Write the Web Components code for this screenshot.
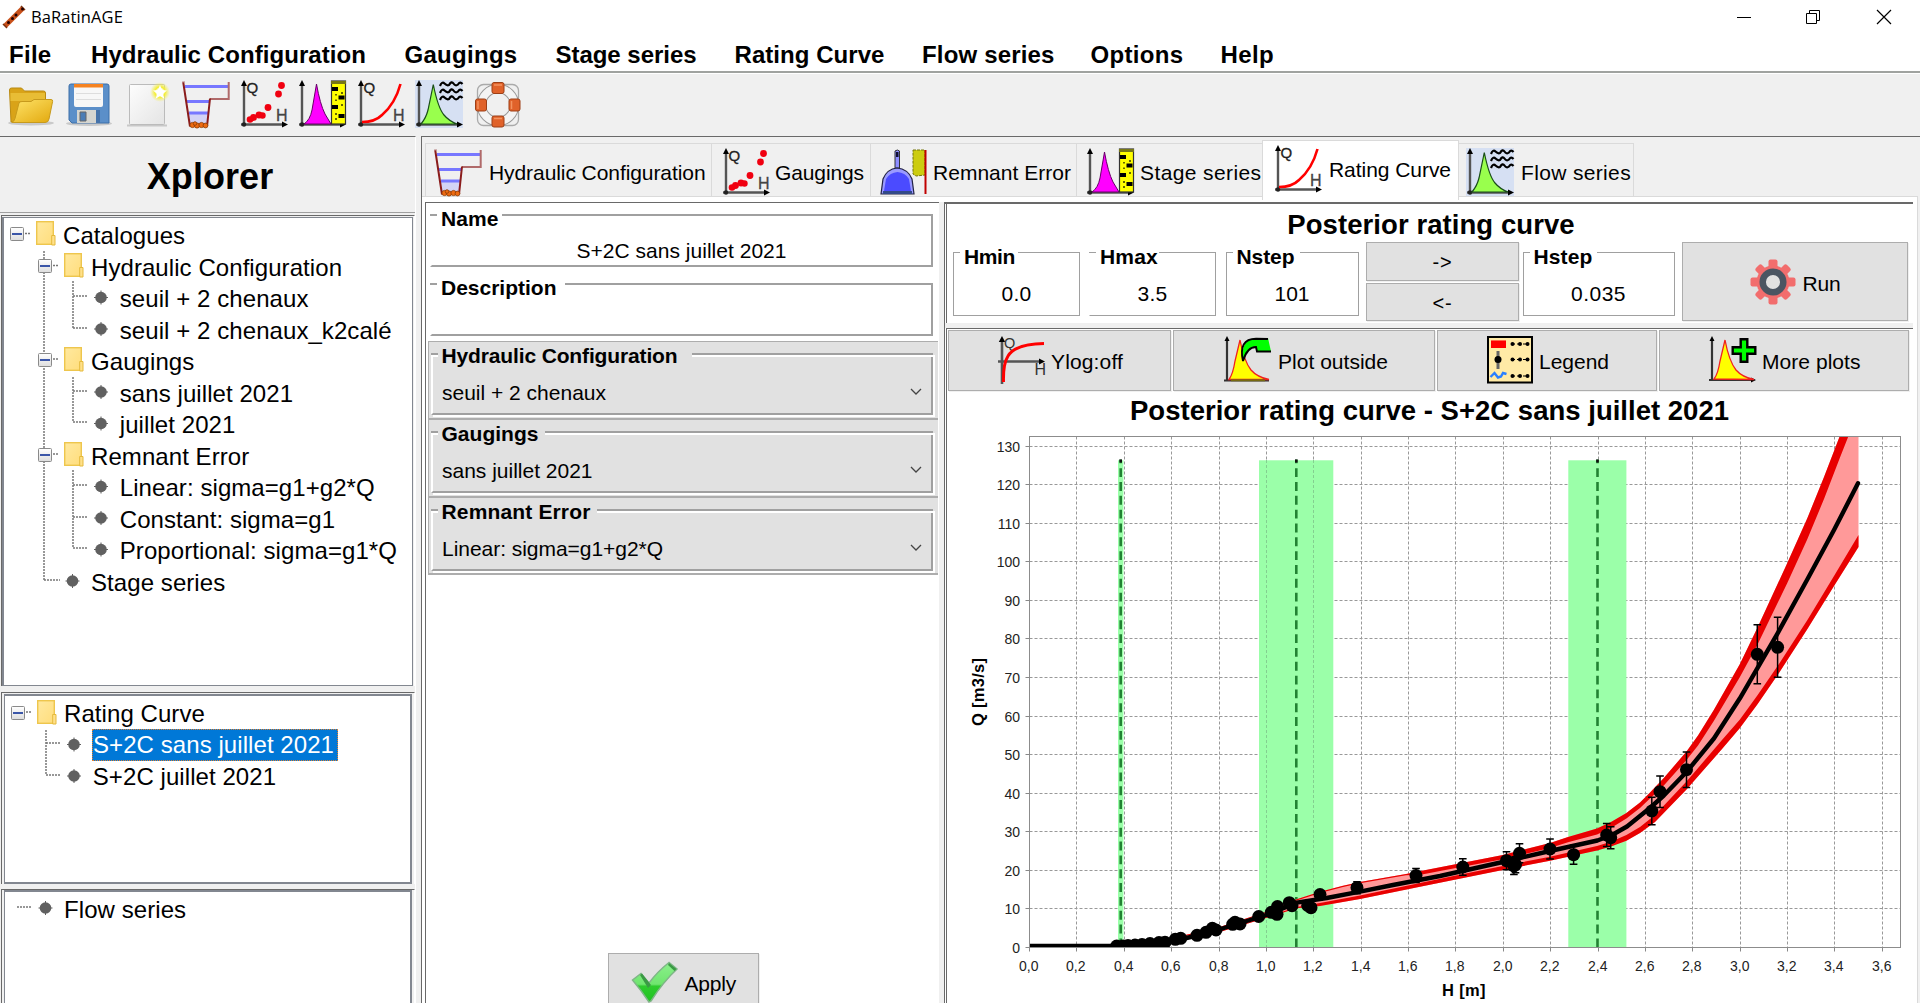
<!DOCTYPE html>
<html lang="en">
<head>
<meta charset="utf-8">
<title>BaRatinAGE</title>
<style>
html,body{margin:0;height:100%;overflow:hidden;background:#fff;font-family:"Liberation Sans",Arial,sans-serif;color:#000}
</style>
</head>
<body>
<baratin-app></baratin-app>
<script>
const define=(name,css,html,setup)=>customElements.define(name,class extends HTMLElement{
  connectedCallback(){
    if(this.shadowRoot)return;
    const r=this.attachShadow({mode:'open'});
    r.innerHTML=`<style>${css}</style>${typeof html==='function'?html(this):html}`;
    if(setup)setup(this,r);
  }
});

/* ---------- icons, all on a 48x48 grid ---------- */
const axes=`<path d="M4 6V45M1 44.5H44" stroke="#555" stroke-width="2.4" fill="none"/><path d="M4 0l3 6H1z" fill="#000"/><path d="M48 44.5l-6-3v6z" fill="#000"/><circle cx="4" cy="44.5" r="2.2" fill="#222"/>`;
const QH=`<text x="6.500" y="12.500" font-size="15" fill="#222" stroke="#222" stroke-width=".3">Q</text><text x="36" y="40.500" font-size="16" fill="#444" stroke="#444" stroke-width=".3">H</text>`;
const wave=y=>`M25 ${y+2.500}q2-5 4.500-2.500t4.500 1.500q2.500-4.500 4.500-1.500t4.500 1q2-3.500 4.500-.5`;
const ICONS={
folder:`<defs><linearGradient id="g1" x1="0" y1="0" x2="1" y2="1"><stop offset="0" stop-color="#ffe46a"/><stop offset="1" stop-color="#e2a80d"/></linearGradient></defs><ellipse cx="24" cy="43" rx="23" ry="2.5" fill="#c9c9c9"/><path d="M2.500 10q0-2 2-2h10l3 3h19q2 0 2 2v29H4z" fill="#d9a318" stroke="#b98a13"/><path d="M3.500 13h34.500v8H3.500z" fill="#e8bd35"/><path d="M12 23q1-1.500 3-1.500h9l3-2h17q2 0 1.600 2L42 39q-.6 3.500-4 3.500H5q2-1 3-4z" fill="url(#g1)" stroke="#c79a1c"/>`,
floppy:`<ellipse cx="24" cy="43.500" rx="23" ry="2.500" fill="#c9c9c9"/><path d="M4 6q0-2 2-2h36q2 0 2 2v37H7l-3-3z" fill="#5b8fc9" stroke="#3d6ea8"/><path d="M9 4h29v21q0 2-2 2H11q-2 0-2-2z" fill="#f7f7f7"/><path d="M9 4h29v3.500H9z" fill="#f58220"/><path d="M11 13.500h25M11 19.500h25" stroke="#ddd"/><path d="M12 30h19v13H12z" fill="#d5d5d0"/><path d="M15 32h6v9h-6z" fill="#4c7db5" stroke="#666"/><path d="M31 30h4v13h-4z" fill="#4573aa"/>`,
newdoc:`<defs><radialGradient id="g2"><stop offset=".3" stop-color="#fff"/><stop offset=".5" stop-color="#f4ee30"/><stop offset="1" stop-color="#f6f16a" stop-opacity="0"/></radialGradient><linearGradient id="g3" x1="0" y1="0" x2="1" y2="1"><stop offset="0" stop-color="#fdfdfd"/><stop offset="1" stop-color="#e4e4e4"/></linearGradient></defs><path d="M3 45.500h40" stroke="#c8c8c8" stroke-width="2"/><rect x="5.500" y="4.500" width="35" height="40" rx="1" fill="url(#g3)" stroke="#bbb"/><circle cx="36" cy="12" r="10" fill="url(#g2)"/><path d="M36 5l2 5 5 .4-4 3.300 1.300 5-4.300-2.700-4.300 2.700 1.300-5-4-3.300 5-.4z" fill="#fff"/>`,
hydro:`<path d="M6.500 33h20L25 46H8.500z" fill="#d3d3f5"/><path d="M3 6.500h43M5 21.500h22M7 33h19" stroke="#7777ff" stroke-width="2.800"/><path d="M28 19h18.700V2" stroke="#b06a6a" stroke-width="2" fill="none"/><path d="M1.200 2L8 46.500M28 18.500L25 46.500" stroke="#8a1c1c" stroke-width="2" fill="none"/><path d="M0 2h3" stroke="#b88" /><g fill="#ee6a11" stroke="#8a3c08" stroke-width=".8"><circle cx="10.500" cy="45" r="2.600"/><circle cx="15" cy="45.500" r="2.600"/><circle cx="19.500" cy="45" r="2.600"/><circle cx="23.500" cy="45.500" r="2.400"/><circle cx="13" cy="43.500" r="1.800"/></g>`,
gaug:axes+QH+`<g fill="#f00010"><circle cx="41.500" cy="5.500" r="3.400"/><circle cx="38.500" cy="14" r="3.400"/><circle cx="28" cy="27.500" r="3.400"/><circle cx="19" cy="35" r="3.400"/><circle cx="22.500" cy="35.500" r="3.200"/><circle cx="13.500" cy="37.500" r="3.400"/><circle cx="10" cy="39.500" r="3.300"/></g>`,
stage:axes+`<path d="M6 44Q12 40 14 30L18.500 4Q22 24 27 34L33 44z" fill="#f0f" stroke="#606" /><rect x="33.500" y="1" width="14" height="43" fill="#ff0" stroke="#333" stroke-width="1.200"/><path d="M33 2.500h15" stroke="#777716" stroke-width="3"/><path d="M34 7h6v4h-6zM40.500 15.500h6v4h-6zM34 25h6v4h-6zM40.500 34h6v4h-6z"/><path d="M38 14v1.500m0 4V21m0 12v2m0 3v2m6-28v2m0 10v2" stroke="#000" stroke-width="1.200"/>`,
rating:axes+QH+`<path d="M5 42Q18 42 25 35Q38 24 43.500 4" stroke="#f00" stroke-width="2.600" fill="none"/>`,
flow:`<rect width="48" height="48" fill="#d6e0f3"/>`+axes+`<path d="M6 44Q11 38 13 30L18.300 4.500Q23 28 29 35Q34 41 42 44z" fill="#99ff4d" stroke="#1a4d1a" stroke-width="1.200"/><path d="${wave(3.500)}${wave(10.500)}${wave(17.500)}" stroke="#000" stroke-width="2.200" fill="none"/>`,
help:`<rect x="4.500" y="4.500" width="41" height="41" rx="6" fill="none" stroke="#aaa" stroke-width="1.300"/><circle cx="25" cy="25" r="16.500" fill="none" stroke="#9a9a9a" stroke-width="9.500"/><circle cx="25" cy="25" r="16.500" fill="none" stroke="#f4f4f4" stroke-width="7.500"/><g fill="#e0622a" stroke="#9d3f16"><rect x="19" y="2.500" width="12" height="11" rx="2"/><rect x="19" y="36" width="12" height="11" rx="2"/><rect x="2.500" y="19" width="11" height="12" rx="2"/><rect x="36" y="19" width="11" height="12" rx="2"/></g><path d="M21 5h8M21 38.500h8M5 21v8M38.500 21v8" stroke="#f3935f" stroke-width="1.500"/>`,
dustpan:`<path d="M15 3q2.500-2 4.500 0v17h-4.500z" fill="#8d8dff" stroke="#333"/><rect x="16" y="4" width="2.500" height="5" fill="#113"/><path d="M1 46L3 31Q7 21 17 20Q28 21 32 31L34 46z" fill="#9a9aff" stroke="#224" stroke-width="1.200"/><path d="M4 43L6 31Q10 24.500 17.500 24Q25 24.500 29 31L31 43z" fill="#4b4bff"/><path d="M3 43h29v3H3z" fill="#334a88"/><path d="M33 2h12v25l-9 1-3-2z" fill="#cccc10" stroke="#77770c" stroke-dasharray="3 1"/><path d="M45.500 2V46" stroke="#c00000" stroke-width="2"/>`,
ylog:`<path d="M4 6V48M0 25.500H42" stroke="#555" stroke-width="2.600"/><path d="M4 0l3.200 6H.8z"/><path d="M47 25.500l-6-3v6z"/><text x="6" y="12" font-size="14.500" fill="#333">Q</text><text x="36.500" y="39" font-size="16" fill="#333">H</text><path d="M5.500 46Q5 28 10 20Q17 8 46 7.500" stroke="#f00" stroke-width="3" fill="none"/>`,
plotout:`<path d="M4 3V44M1 44.500H46" stroke="#333" stroke-width="2.200"/><path d="M4 0l2.500 5h-5z"/><path d="M6 43.500Q10 38 12 25L17 4Q21 25 28 34Q34 41 46 43.500z" fill="#ff0" stroke="#f02020" stroke-width="1.300"/><path d="M8 44.300h34" stroke="#776a10" stroke-width="2"/><path d="M20 25Q17 2 34 2.500L45 2 48 15.500H33V11Q23 11 20 25z" fill="#0f0"/><path d="M20 25Q15 3 33 2.800L45 3M48 15.500H34l-1-4.500Q24 11 20 25" fill="none" stroke="#000" stroke-width="1.900"/>`,
legend:`<rect x="2" y="1" width="44" height="45.500" fill="#ffeaa6" stroke="#000" stroke-width="2"/><rect x="5" y="4" width="15" height="8" fill="#f00"/><path d="M5 4.500h15" stroke="#ff6a4a"/><path d="M12 15v18" stroke="#666" stroke-width="3"/><circle cx="12" cy="23.500" r="3.500"/><path d="M4.500 41l4-4 3.500 4.500 3-1 2-3.500 3.500 1" stroke="#2a7fff" stroke-width="2.400" fill="none"/><g><circle cx="26.500" cy="8" r="2"/><circle cx="34" cy="8" r="2"/><circle cx="41.500" cy="8" r="2"/><circle cx="26.500" cy="23.500" r="2"/><circle cx="34" cy="23.500" r="2"/><circle cx="41.500" cy="23.500" r="2"/><circle cx="26.500" cy="40" r="2"/><circle cx="34" cy="40" r="2"/><circle cx="41.500" cy="40" r="2"/><path d="M25 8h18M25 23.500h18M25 40h18" stroke="#000" stroke-width="1" stroke-dasharray="4 2"/></g>`,
more:`<path d="M4 3V44M1 44H46" stroke="#333" stroke-width="2.200"/><path d="M4 0l2.500 5h-5zM48 44l-5-2.500v5z"/><path d="M6 43Q10 38 12 25L17 4Q21 25 28 34Q34 41 46 43.500z" fill="#ff0" stroke="#f02020" stroke-width="1.300"/><path d="M31.500 2h9v8h8v9h-8v8h-9v-8h-8v-9h8z" fill="#000"/><path d="M33.900 4.400h4.200v8h8v4.200h-8v8h-4.200v-8h-8v-4.200h8z" fill="#0f0"/>`,
gear:`<g fill="#f26d6d"><circle cx="24" cy="24" r="16.500"/><g><rect x="19.500" y="1.500" width="9" height="45" rx="2"/><rect x="1.500" y="19.500" width="45" height="9" rx="2"/></g><g transform="rotate(45 24 24)"><rect x="19.700" y="2" width="8.600" height="44" rx="2.500"/><rect x="2" y="19.700" width="44" height="8.600" rx="2.500"/></g></g><circle cx="24" cy="24" r="10.300" fill="#e1e1e1" stroke="#4b5562" stroke-width="6.500"/>`,
check:`<defs><linearGradient id="g4" x1="0" y1="0" x2="0" y2="1"><stop offset="0" stop-color="#8cf08c"/><stop offset=".55" stop-color="#6fe56f"/><stop offset=".6" stop-color="#2ecb2e"/><stop offset="1" stop-color="#1fc31f"/></linearGradient></defs><path d="M1.500 20L10 13.500 18 23Q26 12 38 2.500L46 9Q32 22 20 41l-2 1Q10 30 1.500 20z" fill="url(#g4)" stroke="#7fb587" stroke-width="1.500"/><path d="M9 15l2-1.500L20 25l-3 3zM38 3l7.500 6-2 2-6.500-6z" fill="#3a9a44"/>`,
flute:`<path d="M6 42L42 6" stroke="#c8501a" stroke-width="10"/><path d="M2 38l8 8M38 2l8 8" stroke="#7a3210" stroke-width="3"/><g fill="#200"><circle cx="13" cy="35" r="3"/><circle cx="21" cy="27" r="3"/><circle cx="28" cy="20" r="3"/><circle cx="41" cy="8" r="3"/></g>`
};
define('app-icon',`:host{display:block;flex:none;width:48px;height:48px}svg{display:block;width:100%;height:100%;overflow:visible;font-family:"Liberation Sans",sans-serif}`,
  e=>`<svg viewBox="0 0 48 48">${ICONS[e.getAttribute('name')]}</svg>`);

/* Single-line label whose tracking is set so that it is `w` pixels wide. */
define('fit-text',`:host{display:block;flex:none;white-space:pre}span{display:inline-block}`,`<span><slot></slot></span>`,(e,r)=>{
  const w=+e.getAttribute('w');if(!w)return;
  const s=r.querySelector('span'),n=e.textContent.length;
  s.style.letterSpacing=((w-s.getBoundingClientRect().width)/n).toFixed(3)+'px';
});

/* ---------- window chrome ---------- */
define('title-bar',`:host{display:flex;height:34px;align-items:center;background:#fff;box-sizing:border-box;padding-left:2px}
app-icon{width:24px;height:24px}fit-text{font:16.500px/24px "Open Sans",sans-serif;margin-left:5px;flex:1 1 auto}
svg{display:block}.c{display:flex;gap:54px;padding-right:28px}`,
`<app-icon name="flute"></app-icon><fit-text w="92">BaRatinAGE</fit-text>
<div class="c"><svg width="16" height="16"><path d="M1 8.500h14" stroke="#000"/></svg>
<svg width="16" height="16" fill="none" stroke="#000"><path d="M.5 4.500h10v10H.5zM3.500 4V1.500h10v10H11"/></svg>
<svg width="16" height="16" stroke="#000" stroke-width="1.200"><path d="M1 1l14 14M15 1L1 15"/></svg></div>`);

define('menu-bar',`:host{display:flex;height:37px;background:#fff;font:bold 24px/42px "Liberation Sans",sans-serif;border-bottom:2px solid #a0a3a0;box-sizing:content-box}fit-text{height:37px}`,
`<fit-text style="margin-left:9px" w="42.500">File</fit-text><fit-text style="margin-left:39.500px" w="275">Hydraulic Configuration</fit-text><fit-text style="margin-left:38.500px" w="113">Gaugings</fit-text><fit-text style="margin-left:38px" w="141">Stage series</fit-text><fit-text style="margin-left:38px" w="150">Rating Curve</fit-text><fit-text style="margin-left:37.500px" w="132.500">Flow series</fit-text><fit-text style="margin-left:36px" w="93">Options</fit-text><fit-text style="margin-left:37px" w="53.500">Help</fit-text>`);

define('tool-bar',`:host{display:flex;gap:10.300px;height:63px;box-sizing:border-box;padding:6px 0 0 7px;background:#f0f0f0;border-top:1px solid #fff}`,
  ['folder','floppy','newdoc','hydro','gaug','stage','rating','flow','help'].map(n=>`<app-icon name="${n}"></app-icon>`).join(''));

/* ---------- explorer ---------- */
define('tree-view',`:host{display:grid;overflow:hidden;background:#fff;font:24px/31.550px "Liberation Sans",sans-serif;align-items:start;letter-spacing:.07px}
svg,.rows{grid-area:1/1}svg{display:block}.rows{display:flex;flex-direction:column;align-items:flex-start}::slotted(*){white-space:pre;height:31.550px}`,
e=>{
  const [ox,oy]=e.getAttribute('origin').split(',').map(Number);
  const lines=(e.getAttribute('lines')||'').split(' ').map(s=>{const[a,b,c,d]=s.split(',');return `M${a} ${b}L${c} ${d}`}).join('');
  const pts=k=>(e.getAttribute(k)||'').split(' ').filter(Boolean).map(s=>s.split(',').map(Number));
  return `<svg width="130" height="380" viewBox="${ox} ${oy} 130 380"><defs><linearGradient id="f" x1="0" y1="0" x2="1" y2="1"><stop offset="0" stop-color="#ffe9a0"/><stop offset="1" stop-color="#ffdd7c"/></linearGradient><linearGradient id="b" x1="0" y1="0" x2="0" y2="1"><stop offset="0" stop-color="#fff"/><stop offset="1" stop-color="#ddd"/></linearGradient></defs>
  <path d="${lines}" stroke="#777" stroke-width="1.500" stroke-dasharray="2 1" fill="none"/>
  ${pts('boxes').map(([x,y])=>`<rect x="${x+.5}" y="${y+.5}" width="13" height="13" rx="1" fill="url(#b)" stroke="#8a8a8a"/><path d="M${x+2} ${y+7}h10" stroke="#3b56a8" stroke-width="2"/>`).join('')}
  ${pts('folders').map(([x,y])=>`<rect x="${x+.7}" y="${y+.7}" width="16.600" height="22.600" fill="url(#f)" stroke="#eec64d" stroke-width="1.400"/><path d="M${x+15.700} ${y+24}v-9.500h3.300v9.500z" fill="#ffe08a" stroke="#e5ba3c"/>`).join('')}
  ${pts('dots').map(([x,y])=>`<circle cx="${x}" cy="${y}" r="5.800" fill="#606060"/><path d="M${x-7} ${y}h14M${x} ${y-7}v14" stroke="#606060"/>`).join('')}</svg>
  <div class="rows" style="padding-top:${e.getAttribute('top')}px"><slot></slot></div>`});

define('x-plorer',`:host{display:flex;flex-direction:column;width:415px;border-top:1px solid #696969;border-right:1px solid #fff;background:#f0f0f0;overflow:hidden}
.h{height:76px;flex:none;box-sizing:border-box;padding:3px 0 0 5px;display:flex;justify-content:center;font:bold 36px/74px "Liberation Sans",sans-serif;border-bottom:1px solid #a0a0a0}
.o{box-sizing:border-box;flex:none;border:solid #696969;border-width:1px 0 0 1px;margin-left:1px;display:flex;border-right:1px solid #fff}
tree-view{flex:1}
.a{margin-top:2px;height:471px;padding:1px 1px 0 0}.a tree-view{border:solid #828790;border-width:1px 1px 1px 2px}
.b{margin-top:6px;height:192px;padding:1px 2px 0 2px}.b tree-view,.c tree-view{border:solid #828790;border-width:2px 2px 2px 1px}
.c{margin-top:5px;height:130px;padding:0 2px 0 2px}
.l1{padding-left:87px}.l2{padding-left:115.800px}.m1{padding-left:87.800px}
.sel{margin-left:87px;background:#0078d7;color:#fff;outline:1px dotted #e08030;outline-offset:-1px;padding:0 4px 0 1px}`,
`<div class="h"><fit-text w="126.500">Xplorer</fit-text></div>
<div class="o a"><tree-view origin="4,218" top="2" boxes="10,227 38,259 38,353 38,448" folders="36,221 64,253 64,347 64,442" dots="101,297.500 101,329 101,392 101,423.500 101,486.500 101,518 101,549.500 72.500,581" lines="25,233.500,31,233.500 44,251,44,580 53,265.500,59,265.500 53,359,59,359 53,454,59,454 73,281,73,328 73,296,88,296 73,328,88,328 73,377,73,422 73,391,88,391 73,422,88,422 73,470,73,548 73,485,88,485 73,517,88,517 73,548,88,548 44,580,60,580">
<div style="padding-left:59px">Catalogues</div><div class="l1">Hydraulic Configuration</div><div class="l2">seuil + 2 chenaux</div><div class="l2">seuil + 2 chenaux_k2calé</div><div class="l1">Gaugings</div><div class="l2">sans juillet 2021</div><div class="l2">juillet 2021</div><div class="l1">Remnant Error</div><div class="l2">Linear: sigma=g1+g2*Q</div><div class="l2">Constant: sigma=g1</div><div class="l2">Proportional: sigma=g1*Q</div><div class="l1">Stage series</div></tree-view></div>
<div class="o b"><tree-view origin="5,696" top="1.900" boxes="11,706" folders="37,700" dots="74,744.500 74,776" lines="26,712,32,712 46,730,46,775 46,743,61,743 46,775,61,775"><div style="padding-left:59px">Rating Curve</div><div class="sel">S+2C sans juillet 2021</div><div class="m1">S+2C juillet 2021</div></tree-view></div>
<div class="o c"><tree-view origin="5,892" top="1.500" dots="45.500,908" lines="17,907,31,907"><div style="padding-left:59px">Flow series</div></tree-view></div>`);

/* ---------- etched titled box ---------- */
define('etched-box',`:host{display:flex;flex-direction:column;box-sizing:border-box;--t:1px;--hl:transparent;--ml:-7.300px;border:solid #a0a0a0;border-width:0 var(--t) var(--t) var(--t);font-size:21px;line-height:24px}
:host([kind=thick]){--t:2px;border-left-color:transparent}
:host([kind=combo]){--t:2px;--hl:#fff;--ml:-8.300px;border-left-color:#fff;box-shadow:2px 2px #fff}
.h{display:flex;align-items:flex-start;margin:0 calc(var(--t)*-1)}
.s{border-top:var(--t) solid #a0a0a0;box-shadow:0 var(--t) var(--hl);width:7px;flex:none}.s.r{flex:1}
.t{flex:none;box-sizing:border-box;margin-top:var(--ml);padding-left:4px;font-weight:bold}
.v{display:flex;justify-content:center}:host([kind=combo]) .v{justify-content:space-between;padding:0 9px 0 9.500px}
svg{display:block;margin-top:7px}`,
e=>`<div class="h"><i class="s"></i><div class="t" style="width:${e.getAttribute('gap')}px"><fit-text w="${e.getAttribute('tw')}">${e.getAttribute('label')}</fit-text></div><i class="s r"></i></div>
<div class="v" style="margin-top:${e.getAttribute('vy')}px"><fit-text w="${e.getAttribute('vw')||0}">${e.getAttribute('value')||''}</fit-text>${e.getAttribute('kind')==='combo'?'<svg width="12" height="8"><path d="M1 1l5 5 5-5" fill="none" stroke="#444" stroke-width="1.300"/></svg>':''}</div>`);

define('combo-field',`:host{display:flex;box-sizing:border-box;height:78px;flex:none;background:#e1e1e1;border:1px solid #adadad;border-right:0;padding:10.500px 5px 0 2px}etched-box{flex:1;height:62px}`,
e=>`<etched-box kind="combo" label="${e.getAttribute('label')}" tw="${e.getAttribute('tw')}" gap="${e.getAttribute('gap')}" value="${e.getAttribute('value')}" vw="${e.getAttribute('vw')}" vy="12.500"></etched-box>`);

define('push-button',`:host{display:flex;box-sizing:border-box;background:#e1e1e1;border:1px solid #adadad;align-items:center;font-size:21px;line-height:24px;box-shadow:1px 1px #f0f0f0}`,`<slot></slot>`);

define('config-panel',`:host{display:flex;flex-direction:column;box-sizing:border-box;width:514px;border:solid #696969;border-width:1px 0 0 1px;background:#fff;padding-top:11px}
.g{margin:0 6px 0 4px;height:53px;flex:none}.d{margin-top:16px}.cs{margin:5px 1px 0 1.500px;flex:none}.cs combo-field:last-child{border-bottom:2px solid #adadad}
push-button{margin:378px 0 0 181.500px;width:151px;height:62px;padding:0 0 0 22px;flex:none}`,
`<etched-box class="g" kind="thick" label="Name" tw="57.500" gap="65" value="S+2C sans juillet 2021" vw="210" vy="8.700"></etched-box>
<etched-box class="g d" kind="thick" label="Description" tw="115.500" gap="128" vy="7.700"></etched-box>
<div class="cs"><combo-field label="Hydraulic Configuration" tw="236" gap="254" value="seuil + 2 chenaux" vw="164"></combo-field><combo-field label="Gaugings" tw="97" gap="107" value="sans juillet 2021" vw="150.500"></combo-field><combo-field label="Remnant Error" tw="149" gap="159" value="Linear: sigma=g1+g2*Q" vw="221"></combo-field></div>
<push-button><app-icon name="check"></app-icon><fit-text style="margin-left:6px" w="51.500">Apply</fit-text></push-button>`);

/* ---------- tabs ---------- */
define('tab-item',`:host{display:flex;box-sizing:border-box;flex:none;height:54px;border:solid #dadada;border-width:1px 1px 1px 0;background:#f0f0f0;font-size:21px;line-height:24px;padding:4px 0 0 0}
:host(:first-child){border-left-width:1px}:host([selected]){height:60px;margin:-3px 0 -3px -1px;background:#fff;border-bottom:0;border-left-width:1px}
fit-text{margin-top:13px}`,
e=>`<app-icon style="margin-left:${e.getAttribute('ix')}px" name="${e.getAttribute('icon')}"></app-icon><fit-text style="margin-left:${e.getAttribute('gx')}px" w="${e.getAttribute('tw')}">${e.textContent}</fit-text>`);

/* ---------- rating curve chart ---------- */
define('rating-chart',`:host{display:block}svg{display:block;font-family:"Liberation Sans",sans-serif}`,()=>{
  const X=h=>1029.5+h*236.900,Y=q=>947.300-q*3.854;
  const L=1029.5,R=1900.5,T=436.5,B=947.500;
  let hg='',vg='',lab='';
  for(let q=0;q<=130;q+=10){const y=Math.round(Y(q)-.5)+.5;if(q)hg+=`M${L} ${y}H${R}`;lab+=`<path d="M${L-4} ${y}h4" stroke="#888"/><text x="1020" y="${y+5.500}" text-anchor="end">${q}</text>`}
  for(let i=0;i<=18;i++){const x=Math.round(X(i*.2)-.5)+.5;if(i)vg+=`M${x} ${T}V${B}`;lab+=`<path d="M${x} ${B}v4" stroke="#888"/><text x="${x-.7}" y="970.700" text-anchor="middle">${(i*.2).toFixed(1).replace('.',',')}</text>`}
  const up=[[1150,943,944],[1218,927.500,928.500],[1266,912,913],[1296.700,899.300,900.500],[1320,891.700,893],[1343,885.700,887],[1360,882,883.200],[1406,874,875.200],[1422,870.700,874.500],[1440,867.300,871],[1502.800,855,859.300],[1550,843,848],[1568,837,842.300],[1597,828.500,834.500],[1611,822,828],[1626.400,813,818.500],[1640,802.500,808],[1650.500,792,798],[1663.800,778,785.500],[1686.500,751.500,760],[1698,735.500,745.500],[1713.800,710,721],[1739.900,664,677],[1757.300,628,645],[1787.300,563,583],[1807.400,518,539],[1824,477,499],[1839.800,436,458],[1848.500,412,436],[1858.500,385,410]];
  const lo=[[1150,946,947],[1218,931.500,932.500],[1266,917,918],[1296.700,907,908.200],[1320,903,906],[1360,895.500,899],[1420,883,886.700],[1462,874.300,878.300],[1502.800,866,870],[1550,856.700,860.700],[1597,846,850.500],[1611,841.700,846.500],[1626.400,835,840.700],[1640,827,833],[1655,815,822],[1686.500,781.500,789.500],[1722,740,749],[1739.900,719.500,728],[1757.300,695.500,704.500],[1777.600,666,675],[1807.400,620,629],[1834,576,586],[1858.500,535,547]];
  const poly=a=>'M'+a.map(p=>p[0]+' '+p[1]).join('L')+'L'+[...a].reverse().map(p=>p[0]+' '+p[2]).join('L')+'Z';
  const pink='M'+up.map(p=>p[0]+' '+p[1]).join('L')+'L'+[...lo].reverse().map(p=>p[0]+' '+p[2]).join('L')+'Z';
  const mid=[[1029,946],[1113,946],[1150,944],[1171.600,941.500],[1197,935.500],[1219,929.500],[1266.400,915],[1296.700,902.700],[1326.700,898],[1360,891.700],[1393,885],[1440,876],[1502.800,862],[1550,851],[1597.400,840.500],[1612,835],[1627,826.500],[1650.500,807.500],[1663.800,795.500],[1686.500,772],[1713.900,738.500],[1739.900,698.300],[1757.300,668.300],[1777.600,633.300],[1807.400,579.300],[1834,530],[1858,483.300]];
  const pts=[[1116.700,946],[1123,946],[1128,945.500],[1135,945],[1142,944.500],[1150,943.500],[1159,942.500],[1165,942.300],[1175.300,939.300],[1180.700,938.300],[1197,935.300],[1206,932.300],[1212.300,928.300],[1216,930],[1232.700,924.300],[1235,922.300],[1240,924],[1258.700,916.500],[1271.300,912.300],[1277.500,906.500],[1277,914.300],[1289.300,902.700],[1292,905.700],[1307.700,905.500],[1311,907.700],[1320,894.500],[1357,887.700,6],[1416,875.500,7],[1462.800,867,8.300],[1506.500,860.700,9],[1519.500,853.300,9.500],[1513.900,866,8.500],[1515.500,864.700,8],[1550,849,10],[1573.600,854.700,9.500],[1606.700,835,11.500],[1610.700,837.700,11],[1651.800,811,13.700],[1660,791.700,15.700],[1686.500,769.700,17.700],[1757.300,654.300,29.500],[1777.600,647.300,30]];
  const bar=(a,b)=>`<rect x="${a}" y="460.300" width="${b-a}" height="487" fill="#9bffa9"/>`;
  const dl=c=>`<path d="M${c} 947.300V459.500" stroke="#228233" stroke-width="2.600" stroke-dasharray="8.900 4.930"/><path d="M${c} 462.500v-3" stroke="#111" stroke-width="2.600"/>`;
  return `<svg width="966" height="612" viewBox="947 391 966 612">
  <text x="1130" y="420" font-size="27.500" font-weight="bold" textLength="599" lengthAdjust="spacing">Posterior rating curve - S+2C sans juillet 2021</text>
  <clipPath id="c"><rect x="1029" y="437" width="871" height="510.500"/></clipPath>
  <path d="${hg}" stroke="#999" stroke-dasharray="3 2"/><path d="${vg}" stroke="#999" stroke-dasharray="3 2"/>
  <g clip-path="url(#c)">${bar(1118,1123.400)}${bar(1259,1333.300)}${bar(1568.300,1626.400)}
  <path d="M1266.500 460V947M1313.500 460V947" stroke="#84cf90" stroke-dasharray="3 2"/>
  ${dl(1120.700)}${dl(1296.300)}${dl(1597.500)}
  <path d="${pink}" fill="#f99"/><path d="${poly(up)}${poly(lo)}" fill="#e80000"/>
  <polyline points="${mid.map(p=>p.join()).join(' ')}" fill="none" stroke="#000" stroke-width="4.400" stroke-linejoin="round" stroke-linecap="round"/>
  ${pts.map(([x,y,e])=>`<circle cx="${x}" cy="${y}" r="6.500"/>`+(e?`<path d="M${x} ${y-e}V${y+e}M${x-3.800} ${y-e}h7.600M${x-3.800} ${y+e}h7.600" stroke="#000" stroke-width="1.500"/>`:'')).join('')}</g>
  <rect x="${L}" y="${T}" width="${R-L}" height="${B-T}" fill="none" stroke="#8c8c8c"/>
  <g font-size="14" fill="#222">${lab}</g>
  <text x="1442" y="996" font-size="16.500" font-weight="bold" textLength="43.500">H [m]</text>
  <text transform="translate(984 726) rotate(-90)" font-size="16.500" font-weight="bold" textLength="68">Q [m3/s]</text></svg>`});

define('curve-panel',`:host{display:flex;flex-direction:column;flex:1;box-sizing:border-box;background:#fff;border:solid #696969;border-width:2px 0 0 1px}
.top{height:119px;flex:none;border-left:1px solid #696969;margin-left:1px;display:flex;flex-direction:column;align-items:center;box-sizing:border-box}
h2{margin:3px 0 0;padding-left:2px;height:35px;font:bold 27.500px/35px "Liberation Sans",sans-serif}
.f{display:flex;align-self:stretch;height:79px}.f etched-box{height:64px;margin-top:10px;flex:none}
.ar{display:flex;flex-direction:column;gap:2px;width:153px;margin-left:7.500px}.ar push-button{height:38.500px;justify-content:center;font-size:20px;padding-top:2px}
.sp{height:5px;flex:none;background:#f0f0f0}
.bot{border:solid #696969;border-width:1px 0 0 1px;margin-left:1px;flex:1;min-height:0}
.btns{display:flex;gap:2px;padding:1px 0 0 1px}.btns push-button{height:61px;padding-bottom:1px}.btns fit-text{margin-top:4px}`,
`<div class="top"><h2><fit-text w="287.500">Posterior rating curve</fit-text></h2><div class="f">
<etched-box style="margin-left:6px;width:127px" label="Hmin" tw="51" gap="58" value="0.0" vw="30" vy="13.700"></etched-box>
<etched-box style="margin-left:9px;width:127px;border-left-color:transparent" label="Hmax" tw="58" gap="63" value="3.5" vw="30" vy="13.700"></etched-box>
<etched-box style="margin-left:9.500px;width:133px" label="Nstep" tw="58" gap="67" value="101" vw="35" vy="13.700"></etched-box>
<div class="ar"><push-button><fit-text w="20">-&gt;</fit-text></push-button><push-button><fit-text w="20">&lt;-</fit-text></push-button></div>
<etched-box style="margin-left:3.500px;width:152px" label="Hstep" tw="59" gap="67" value="0.035" vw="55" vy="13.700"></etched-box>
<push-button style="margin-left:7px;width:226px;padding-left:66px"><app-icon name="gear"></app-icon><fit-text style="margin:4px 0 0 6px" w="38">Run</fit-text></push-button></div></div>
<div class="sp"></div>
<div class="bot"><div class="btns">
<push-button style="width:223px;padding-left:49px"><app-icon name="ylog"></app-icon><fit-text w="72" style="margin-left:5px">Ylog:off</fit-text></push-button>
<push-button style="width:262px;padding-left:49px"><app-icon name="plotout"></app-icon><fit-text w="110" style="margin-left:7px">Plot outside</fit-text></push-button>
<push-button style="width:220px;padding-left:48px"><app-icon name="legend"></app-icon><fit-text w="70" style="margin-left:5px">Legend</fit-text></push-button>
<push-button style="width:250px;padding-left:48px"><app-icon name="more"></app-icon><fit-text w="98.500" style="margin-left:6px">More plots</fit-text></push-button></div>
<rating-chart></rating-chart></div>`);

define('work-area',`:host{display:flex;flex-direction:column;flex:1;box-sizing:border-box;border:solid #696969;border-width:1px 0 0 1px;min-width:0;background:#f0f0f0}
.tabs{position:relative;display:flex;padding:6px 0 0 3px;height:60px;box-sizing:border-box;align-items:flex-start}
.pg{flex:1;min-height:0;display:flex;background:#fff;border:solid #dadada;border-width:1px 1px 0 0;margin-right:2px;margin-top:-1px;padding:5px 4px 0 3px;overflow:hidden}
.gap{width:5px;background:#f0f0f0}`,
`<div class="tabs">
<tab-item style="width:287px" icon="hydro" ix="8" gx="7" tw="216.500">Hydraulic Configuration</tab-item>
<tab-item style="width:159px" icon="gaug" ix="10" gx="5" tw="89">Gaugings</tab-item>
<tab-item style="width:206px" icon="dustpan" ix="9" gx="5" tw="138">Remnant Error</tab-item>
<tab-item style="width:186px" icon="stage" ix="9" gx="6" tw="121.500">Stage series</tab-item>
<tab-item style="width:197px" selected icon="rating" ix="11" gx="7" tw="122">Rating Curve</tab-item>
<tab-item style="width:175px" icon="flow" ix="7" gx="7" tw="110">Flow series</tab-item></div>
<div class="pg"><config-panel></config-panel><div class="gap"></div><curve-panel></curve-panel></div>`);

define('baratin-app',`:host{display:flex;flex-direction:column;width:1920px;height:1003px;overflow:hidden;background:#f0f0f0}
title-bar,menu-bar,tool-bar{flex:none}.m{display:flex;flex:1;min-height:0;gap:5px}`,
`<title-bar></title-bar><menu-bar></menu-bar><tool-bar></tool-bar><div class="m"><x-plorer></x-plorer><work-area></work-area></div>`);
</script>
</body>
</html>
